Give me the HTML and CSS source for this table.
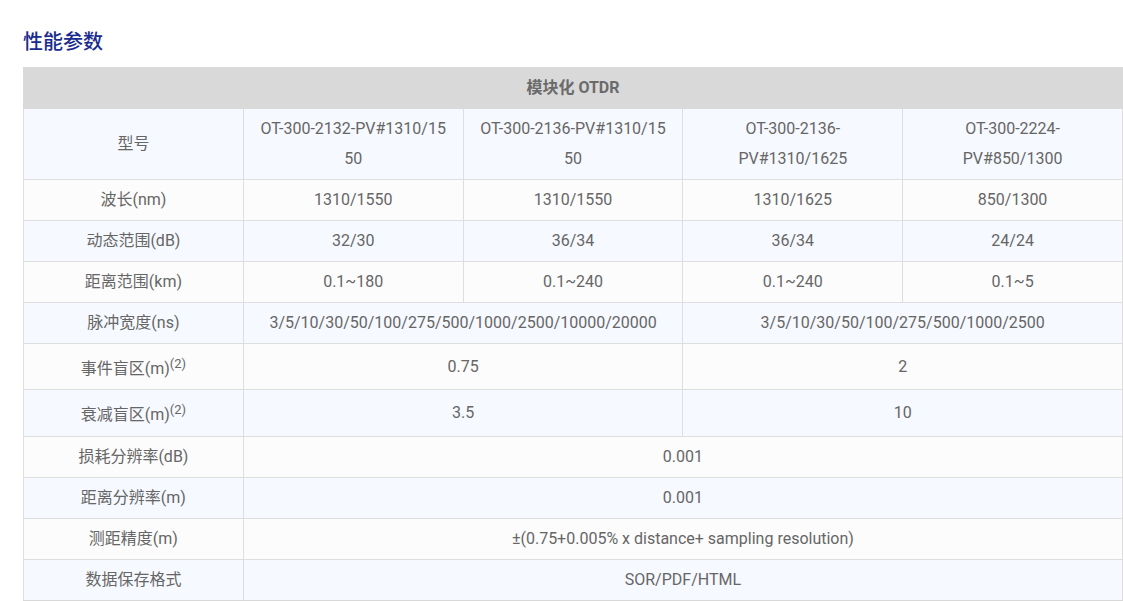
FILE: index.html
```html
<!DOCTYPE html>
<html lang="zh-CN">
<head>
<meta charset="utf-8">
<title>性能参数</title>
<link rel="stylesheet" href="styles.css">
</head>
<body>
<section class="spec">
  <h2 class="spec-title">性能参数</h2>
  <table class="spec-table">
    <colgroup>
      <col class="c"><col class="c"><col class="c"><col class="c"><col class="c">
    </colgroup>
    <thead>
      <tr class="head"><th colspan="5">模块化 OTDR</th></tr>
    </thead>
    <tbody>
      <tr class="alt">
        <td>型号</td>
        <td class="model">OT-300-2132-PV#1310/1550</td>
        <td class="model">OT-300-2136-PV#1310/1550</td>
        <td>OT-300-2136-PV#1310/1625</td>
        <td>OT-300-2224-PV#850/1300</td>
      </tr>
      <tr>
        <td>波长(nm)</td><td>1310/1550</td><td>1310/1550</td><td>1310/1625</td><td>850/1300</td>
      </tr>
      <tr class="alt">
        <td>动态范围(dB)</td><td>32/30</td><td>36/34</td><td>36/34</td><td>24/24</td>
      </tr>
      <tr>
        <td>距离范围(km)</td><td>0.1~180</td><td>0.1~240</td><td>0.1~240</td><td>0.1~5</td>
      </tr>
      <tr class="alt">
        <td>脉冲宽度(ns)</td><td colspan="2">3/5/10/30/50/100/275/500/1000/2500/10000/20000</td><td colspan="2">3/5/10/30/50/100/275/500/1000/2500</td>
      </tr>
      <tr>
        <td>事件盲区(m)<sup>(2)</sup></td><td colspan="2">0.75</td><td colspan="2">2</td>
      </tr>
      <tr class="alt">
        <td>衰减盲区(m)<sup>(2)</sup></td><td colspan="2">3.5</td><td colspan="2">10</td>
      </tr>
      <tr>
        <td>损耗分辨率(dB)</td><td colspan="4">0.001</td>
      </tr>
      <tr class="alt">
        <td>距离分辨率(m)</td><td colspan="4">0.001</td>
      </tr>
      <tr>
        <td>测距精度(m)</td><td colspan="4">±(0.75+0.005% x distance+ sampling resolution)</td>
      </tr>
      <tr class="alt">
        <td>数据保存格式</td><td colspan="4">SOR/PDF/HTML</td>
      </tr>
    </tbody>
  </table>
</section>
</body>
</html>
```

FILE: styles.css
```css
html, body {
  margin: 0;
  padding: 0;
  background: #fff;
}
body {
  font-family: Roboto, "Noto Sans CJK SC", sans-serif;
  color: #666;
}
.spec {
  padding: 29px 0 0 23px;
}
.spec-title {
  margin: 0 0 12px;
  font-size: 20px;
  line-height: 26px;
  font-weight: 500;
  color: #1a2b8e;
}
.spec-table {
  width: 1100px;
  table-layout: fixed;
  border-collapse: collapse;
  border: 1px solid #dcdcdc;
  border-bottom: 2px solid #d8d8d8;
  font-size: 16px;
}
.spec-table th,
.spec-table td {
  border: 1px solid #dedede;
  padding: 5px 14px;
  line-height: 30px;
  text-align: center;
  vertical-align: middle;
}
.spec-table td.model {
  word-break: break-all;
}
.spec-table .head th {
  background: #d9d9d9;
  font-weight: 700;
  color: #6a6a6a;
  border-color: #d9d9d9;
}
.spec-table tbody tr {
  background: #fcfcfc;
}
.spec-table tbody tr.alt {
  background: #f6f9ff;
}
.spec-table sup {
  font-size: 13px;
  line-height: 30px;
  vertical-align: super;
}
```
